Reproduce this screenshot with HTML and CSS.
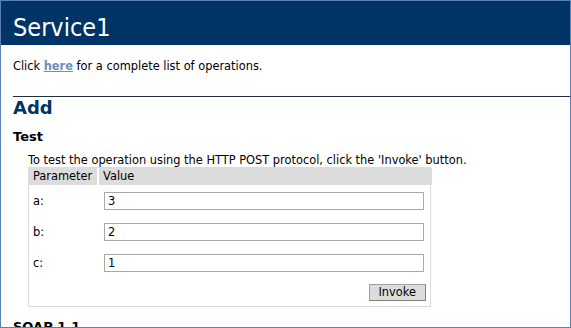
FILE: index.html
```
<!DOCTYPE html>
<html lang="en">
<head>
    <meta charset="UTF-8">
    <title>Service1 Web Service</title>
    <link rel="stylesheet" href="styles.css">
</head>
<body>
    <div class="frame">
        <div class="heading1">Service1</div>

        <div class="content">
            <p class="intro">Click <a href="#">here</a> for a complete list of operations.</p>

            <div class="rule"></div>

            <h2>Add</h2>

            <h3>Test</h3>
            <p class="test-note">To test the operation using the HTTP POST protocol, click the 'Invoke' button.</p>

            <!-- test form -->
            <form class="test-form" onsubmit="return false;">
                <div class="frm-header frm-param">Parameter</div>
                <div class="frm-header">Value</div>

                <label class="frm-text" for="a">a:</label>
                <div class="frm-cell"><input class="frm-input" type="text" id="a" value="3"></div>

                <label class="frm-text" for="b">b:</label>
                <div class="frm-cell"><input class="frm-input" type="text" id="b" value="2"></div>

                <label class="frm-text" for="c">c:</label>
                <div class="frm-cell"><input class="frm-input" type="text" id="c" value="1"></div>

                <div></div>
                <div class="frm-cell frm-submit"><input class="button" type="submit" value="Invoke"></div>
            </form>

            <h3 class="soap">SOAP 1.1</h3>
        </div>
    </div>
</body>
</html>
```

FILE: styles.css
```
* { margin: 0; padding: 0; box-sizing: border-box; }
html, body { height: 100%; }
body {
    font-family: "DejaVu Sans", Verdana, sans-serif;
    color: #000; background: #fff;
}
.frame {
    height: 100vh; overflow: hidden;
    border: 1px solid #5a80b5; background: #fff;
}
.heading1 {
    height: 44px; padding: 12px 0 3px 12px;
    background: #003366; color: #fff;
    font-family: "DejaVu Sans Condensed", Tahoma, sans-serif;
    font-size: 25px; line-height: 29px; font-weight: normal;
}
.content { padding-left: 12px; }
.intro { margin-top: 15px; font-size: 11.4px; line-height: 13px; }
.intro a { color: #6d8fb8; font-weight: bold; text-decoration: underline; }
.rule { margin-top: 23px; border-top: 1px solid #1f2f40; }
h2 {
    margin-top: 1px; color: #003366;
    font-size: 18px; line-height: 20px; font-weight: bold;
}
h3 { margin-top: 11px; font-size: 13px; line-height: 15px; font-weight: bold; }
.test-note { margin: 10px 0 0 15px; font-size: 11.4px; line-height: 13px; }
.test-form {
    display: grid; grid-template-columns: 70px 333px;
    width: 403px; margin-left: 15px;
    border: 1px solid #dcdcdc; font-size: 11.4px;
}
.frm-header {
    background: #dcdcdc; padding: 2px 4px; line-height: 13px;
}
.frm-param { border-right: 2px solid #fff; }
.frm-text { display: flex; align-items: center; padding-left: 4px; padding-top: 1px; }
.frm-cell { padding: 7px 6px 6px 5px; }
.frm-input {
    display: block; width: 320px; height: 18px;
    padding: 0 3px; border: 1px solid #a8a8a8;
    font-family: "DejaVu Sans", Verdana, sans-serif; font-size: 11.4px; color: #000;
}
.frm-submit { display: flex; justify-content: flex-end; padding-top: 6px; padding-bottom: 5px; }
.button {
    height: 17px; padding: 0 9px; line-height: 15px;
    background: #dcdcdc; border: 1px solid #a0a0a0; border-right-color: #808080; border-bottom-color: #808080;
    font-family: "DejaVu Sans", Verdana, sans-serif; font-size: 11.4px; color: #000;
}
.soap { margin-top: 12px; }
```
